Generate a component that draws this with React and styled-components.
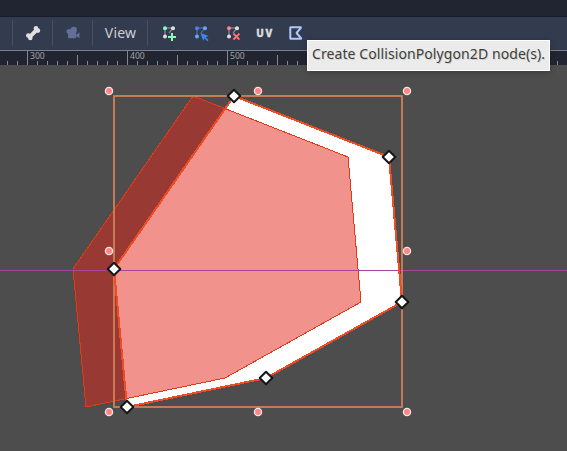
import React from 'react';
import styled, { createGlobalStyle } from 'styled-components';

const GlobalStyle = createGlobalStyle`
  * { box-sizing: border-box; }
  body { margin: 0; background: #4d4d4d; font-family: "Noto Sans", sans-serif; overflow: hidden; }
`;

const Editor = styled.main`
  position: relative;
  display: flex;
  flex-direction: column;
  width: 567px;
  height: 451px;
  overflow: hidden;
  background: #4d4d4d;
`;

const TopStrip = styled.header`
  flex: none;
  height: 17px;
  background: #212531;
  border-bottom: 1px solid #191d27;
`;

const Toolbar = styled.nav`
  flex: none;
  display: flex;
  align-items: center;
  height: 33px;
  padding: 0 0 1px 12px;
  background: #333b4f;
`;

const Separator = styled.span`
  flex: none;
  width: 1px;
  height: 26px;
  background: #474e60;
`;

const ToolButton = styled.button`
  flex: none;
  display: flex;
  align-items: center;
  justify-content: center;
  width: ${(p) => p.$width}px;
  height: 32px;
  padding: 0;
  border: 0;
  background: transparent;
`;

const ViewLabel = styled.span`
  font: 14px/20px "Noto Sans", sans-serif;
  letter-spacing: 0.2px;
  padding-left: 1px;
  color: #cdcfd4;
`;

const UvLabel = styled.span`
  font: 800 10px/14px "Noto Sans", sans-serif;
  letter-spacing: 1.5px;
  color: #e0e0e0;
  -webkit-text-stroke: 0.3px #e0e0e0;
`;

const Icon = styled.svg`
  display: block;
  width: 16px;
  height: 16px;
  overflow: visible;
`;

const Ruler = styled.div`
  flex: none;
  display: flex;
  height: 15px;
  background: #212531;
  border-top: 1px solid #7c808a;
`;

const Canvas = styled.section`
  flex: 1;
  min-height: 0;
`;

const Drawing = styled.svg`
  display: block;
  overflow: visible;
`;

const Tooltip = styled.div`
  position: absolute;
  left: 307px;
  top: 40px;
  width: 243px;
  height: 31px;
  padding-left: 4px;
  border: 1px solid #fff;
  background: #ebebeb;
  color: #40403a;
  font: 14px/26px "Noto Sans", sans-serif;
  letter-spacing: 0.09px;
  white-space: nowrap;
  text-shadow: 1px 1px 0 rgba(0, 0, 0, 0.12);
  box-shadow: 0 1px 6px rgba(0, 0, 0, 0.25);
`;

const ticks = Array.from({ length: 56 }, (_, i) => 7 + i * 10);
const tickTop = (x) => (x % 100 === 27 ? 0 : x % 50 === 27 ? 4 : 10);

const polygon = [[234, 96], [389, 157], [402, 302], [266, 378], [127, 407], [114, 269]];
const points = polygon.map((p) => p.join(',')).join(' ');
const collision = polygon.map(([x, y]) => `${x - 41},${y}`).join(' ');
const handles = [[109, 91], [258, 91], [407, 91], [109, 251], [407, 251], [109, 412], [258, 412], [407, 412]];

function PointsIcon({ first, second, third, children }) {
  return (
    <Icon viewBox="0 0 16 16">
      <path d="M3 11V3h8L7 8" fill="none" stroke={second} strokeOpacity=".4" strokeWidth="1.5" />
      <circle cx="3" cy="3.2" r="2" fill={first} />
      <circle cx="11" cy="3.2" r="2" fill={second} />
      <circle cx="3" cy="11.5" r="2" fill={third} />
      {children}
    </Icon>
  );
}

export default function App() {
  return (
    <Editor>
      <GlobalStyle />
      <TopStrip />
      <Toolbar>
        <Separator />
        <ToolButton $width={39} aria-label="Show bones">
          <Icon viewBox="0 0 16 16">
            <g fill="#e0e0e0">
              <circle cx="11" cy="3.3" r="2.3" />
              <circle cx="12.9" cy="5.6" r="2.3" />
              <circle cx="3.3" cy="10.6" r="2.3" />
              <circle cx="5.3" cy="12.9" r="2.3" />
              <path d="M3.5 10.5 9.4 4.2l3 2.7-6 6z" />
            </g>
          </Icon>
        </ToolButton>
        <Separator />
        <ToolButton $width={39} aria-label="Override camera">
          <Icon viewBox="0 0 16 16">
            <g fill="#616f99">
              <circle cx="4" cy="6.6" r="2.5" />
              <circle cx="8.7" cy="5" r="3.2" />
              <rect x="3" y="6" width="8.2" height="7.2" rx="1" />
              <path d="m11 10 3.5-2.8v6L11 11z" />
            </g>
          </Icon>
        </ToolButton>
        <Separator />
        <ToolButton $width={54}><ViewLabel>View</ViewLabel></ToolButton>
        <Separator />
        <ToolButton $width={44} aria-label="Create points">
          <PointsIcon first="#84ffb1" second="#e0e0e0" third="#e0e0e0">
            <path d="M10 8v8M6 12h8" stroke="#84ffb1" strokeWidth="2" />
          </PointsIcon>
        </ToolButton>
        <ToolButton $width={20} aria-label="Edit points">
          <PointsIcon first="#4285ef" second="#6ba5ff" third="#6ba5ff">
            <path d="m6.4 8 8.2 3-3 1.2 3 2.8-1.2 1.2-3-3-1.2 2.6z" fill="#4285ef" />
          </PointsIcon>
        </ToolButton>
        <ToolButton $width={44} aria-label="Erase points">
          <PointsIcon first="#ff8484" second="#e0e0e0" third="#e0e0e0">
            <path d="m7.4 8.6 6 6M13.4 8.6l-6 6" stroke="#ff7070" strokeWidth="2" />
          </PointsIcon>
        </ToolButton>
        <ToolButton $width={18}><UvLabel>UV</UvLabel></ToolButton>
        <ToolButton $width={44} aria-label="Create collision polygon">
          <Icon viewBox="0 0 16 16">
            <path d="M2.3 2.3h11L8.5 8l5 5.7H2.3z" fill="none" stroke="#b0c7fb" strokeWidth="2" strokeLinejoin="bevel" />
          </Icon>
        </ToolButton>
      </Toolbar>
      <Ruler>
        <Drawing width="567" height="14">
          {ticks.map((x) => (
            <rect key={x} x={x} y={tickTop(x)} width="1" height={14 - tickTop(x)} fill="#858891" />
          ))}
          {[300, 400, 500].map((n) => (
            <text key={n} x={n - 270} y="8" fontSize="9.6" textLength="14.8" lengthAdjust="spacingAndGlyphs" fontFamily="Noto Sans, sans-serif" fill="#a0a2a8">{n}</text>
          ))}
        </Drawing>
      </Ruler>
      <Canvas>
        <Drawing width="567" height="386" viewBox="0 65 567 386">
          <polygon points={points} fill="#fff" />
          <polygon points={collision} fill="#e52619" fillOpacity=".5" />
          <polygon points={collision} fill="none" stroke="#e23916" strokeWidth="1" shapeRendering="crispEdges" />
          <path d="M0 270.5h567" stroke="#a44797" />
          <rect x="114" y="96" width="288" height="311" fill="none" stroke="#d0805a" strokeWidth="1.8" />
          <polygon points={points} fill="none" stroke="#f04b22" strokeWidth="2" shapeRendering="crispEdges" />
          {handles.map(([x, y]) => (
            <circle key={`${x}-${y}`} cx={x} cy={y} r="3.6" fill="#ff8484" stroke="#f0e8e6" strokeWidth="1.3" />
          ))}
          {polygon.map(([x, y]) => (
            <path key={`${x}-${y}`} d={`M${x} ${y - 6.3}l6.3 6.3-6.3 6.3-6.3-6.3z`} fill="#fff" stroke="#151515" strokeWidth="2" strokeLinejoin="round" />
          ))}
        </Drawing>
      </Canvas>
      <Tooltip role="tooltip">Create CollisionPolygon2D node(s).</Tooltip>
    </Editor>
  );
}
